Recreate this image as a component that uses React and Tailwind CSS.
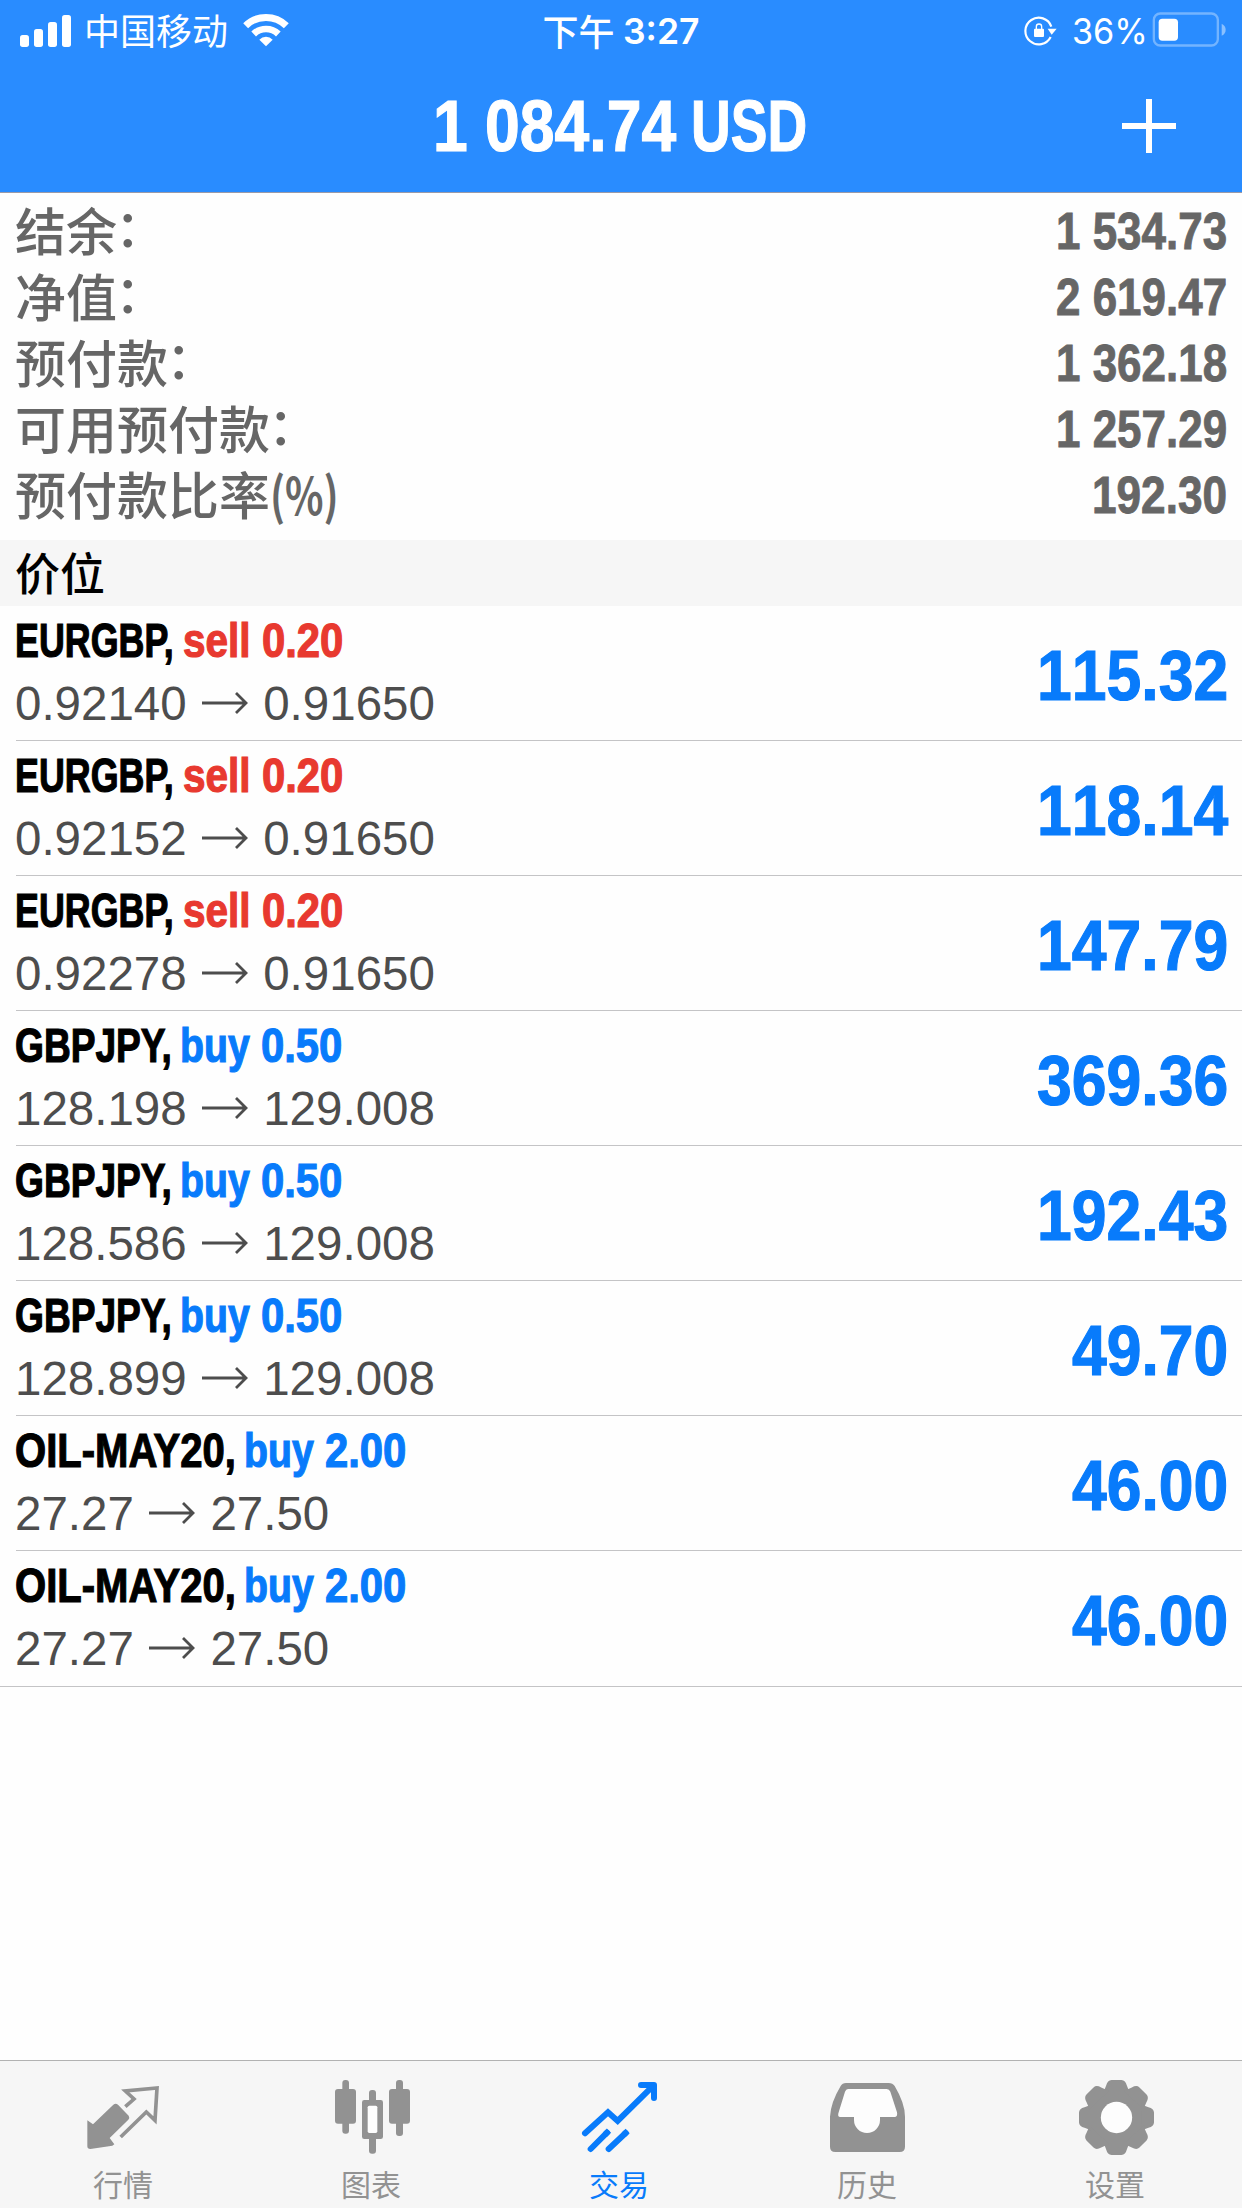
import React, { useLayoutEffect, useRef, useState } from "react";

// Condensed lettering: squeezes the text horizontally to the given width.
function Fit({ width, className = "", children }) {
  const ref = useRef(null);
  const [scale, setScale] = useState(1);
  useLayoutEffect(() => {
    setScale(width / ref.current.offsetWidth);
  }, [width, children]);
  return (
    <span className={"inline-block whitespace-nowrap " + className} style={{ width }}>
      <span ref={ref} className="inline-block origin-left" style={{ transform: `scaleX(${scale})` }}>
        {children}
      </span>
    </span>
  );
}

const balances = [
  ["结余", "：", "1 534.73", 171.5],
  ["净值", "：", "2 619.47", 171.5],
  ["预付款", "：", "1 362.18", 171.5],
  ["可用预付款", "：", "1 257.29", 171.5],
  ["预付款比率", "(%)", "192.30", 135],
];

const positions = [
  { symbol: "EURGBP,", side: "sell", volume: "0.20", from: "0.92140", to: "0.91650", profit: "115.32" },
  { symbol: "EURGBP,", side: "sell", volume: "0.20", from: "0.92152", to: "0.91650", profit: "118.14" },
  { symbol: "EURGBP,", side: "sell", volume: "0.20", from: "0.92278", to: "0.91650", profit: "147.79" },
  { symbol: "GBPJPY,", side: "buy", volume: "0.50", from: "128.198", to: "129.008", profit: "369.36" },
  { symbol: "GBPJPY,", side: "buy", volume: "0.50", from: "128.586", to: "129.008", profit: "192.43" },
  { symbol: "GBPJPY,", side: "buy", volume: "0.50", from: "128.899", to: "129.008", profit: "49.70" },
  { symbol: "OIL-MAY20,", side: "buy", volume: "2.00", from: "27.27", to: "27.50", profit: "46.00" },
  { symbol: "OIL-MAY20,", side: "buy", volume: "2.00", from: "27.27", to: "27.50", profit: "46.00" },
];

const symbolWidth = { "EURGBP,": 159, "GBPJPY,": 157, "OIL-MAY20,": 221 };

function StatusBar() {
  return (
    <div className="grid h-[62px] grid-cols-3 items-center text-white">
      <div className="flex items-center pl-5">
        <svg width="51" height="32" viewBox="60 42 153 96" fill="currentColor">
          <rect x="60" y="102" width="27" height="36" rx="8" />
          <rect x="102" y="84" width="27" height="54" rx="8" />
          <rect x="144" y="63" width="27" height="75" rx="8" />
          <rect x="186" y="42" width="27" height="96" rx="8" />
        </svg>
        <span className="-mt-[4px] ml-[13px] font-['Noto_Sans_CJK_SC',sans-serif] text-[36px] leading-[60px] font-normal">中国移动</span>
        <svg className="-mt-[3px] ml-[15px]" width="46" height="34" viewBox="728 37 138 102" fill="none" stroke="currentColor">
          <path d="M736 75 A87.5 87.5 0 0 1 858 75" strokeWidth="21" />
          <path d="M760 100 A53 53 0 0 1 834 100" strokeWidth="20" />
          <path d="M797 137 L777 117 A28 28 0 0 1 817 117Z" fill="currentColor" stroke="none" />
        </svg>
      </div>
      <div className="-mt-[3px] flex items-center justify-center leading-[60px]">
        <span className="font-['Noto_Sans_CJK_SC',sans-serif] text-[36px] font-medium">下午</span>
        <span className="mt-[2px] ml-2 font-['Inter',sans-serif] text-[36px] font-semibold">
          <Fit width={77}>3:27</Fit>
        </span>
      </div>
      <div className="flex items-center justify-end pr-4 leading-[60px]">
        <svg width="33" height="32" viewBox="130 47 99 96" fill="none" stroke="currentColor">
          <path d="M210 113 A40 40 0 1 1 212 82" strokeWidth="6.5" />
          <path d="M201 88 H228 L213 106Z" fill="currentColor" stroke="none" />
          <rect x="160" y="88" width="30" height="25" rx="3" fill="currentColor" stroke="none" />
          <path d="M167 90 V82 A8 8 0 0 1 183 82 V90" strokeWidth="4" />
        </svg>
        <span className="ml-[15px] font-['Inter',sans-serif] text-[36px]">
          <Fit width={76}>36%</Fit>
        </span>
        <svg className="-mt-[2px] ml-[4px]" width="74" height="36" viewBox="517 37 222 108" fill="none">
          <rect x="522.5" y="41.500" width="192" height="96" rx="19" stroke="#fff" strokeOpacity="0.35" strokeWidth="7" />
          <rect x="537" y="57" width="58" height="66" rx="11" fill="#fff" />
          <path d="M726 72 Q738 78 738 90 Q738 102 726 108Z" fill="#fff" fillOpacity="0.45" />
        </svg>
      </div>
    </div>
  );
}

function Header() {
  return (
    <header className="h-[193px] border-b border-[#9a9aa8] bg-[#298cff]">
      <StatusBar />
      <div className="grid h-[128px] grid-cols-[1fr_auto_1fr] items-center text-white">
        <span />
        <h1 className="flex pr-[2px] font-['Liberation_Sans',sans-serif] text-[73px] leading-[100px] font-bold [-webkit-text-stroke:1.2px]">
          <Fit width={243}>1 084.74</Fit>
          <Fit width={116} className="ml-[15px]">USD</Fit>
        </h1>
        <button className="mr-[65px] justify-self-end">
          <svg width="56" height="56" viewBox="0 0 56 56" stroke="#fff" strokeWidth="6">
            <path d="M28 1V55M1 28H55" />
          </svg>
        </button>
      </div>
    </header>
  );
}

function Balances() {
  return (
    <section className="h-[347px] pt-[5px] text-[#666]">
      {balances.map(([label, suffix, value, width]) => (
        <div key={label} className="flex h-[66px] items-center justify-between pr-[15px] pl-[15px]">
          <span className="-mt-[4px] flex font-['Noto_Sans_CJK_SC',sans-serif] text-[51px] leading-[66px] font-medium">
            {label}
            {suffix === "(%)" ? (
              <Fit width={69} className="font-bold">{suffix}</Fit>
            ) : (
              <span className="-translate-x-[2px] -translate-y-[4px]">{suffix}</span>
            )}
          </span>
          <span className="mt-[2px] font-['Liberation_Sans',sans-serif] text-[51px] leading-[66px] font-bold [-webkit-text-stroke:0.9px]">
            <Fit width={width}>{value}</Fit>
          </span>
        </div>
      ))}
    </section>
  );
}

function Position({ p, last }) {
  const sell = p.side === "sell";
  return (
    <li className={last ? "h-[136px] border-b border-[#c4c4c6] pl-[15px]" : "h-[135px] pl-[15px]"}>
      <div className={last ? "flex h-full justify-between pr-[14px]" : "ml-px flex h-full justify-between border-b border-[#c4c4c6] pr-[14px]"}>
        <div className={last ? "pt-[5px]" : "-ml-px pt-[5px]"}>
          <div className="flex h-[60px] font-['Liberation_Sans',sans-serif] text-[48px] leading-[60px] font-bold [-webkit-text-stroke:1.2px]">
            <Fit width={symbolWidth[p.symbol]} className="text-black">{p.symbol}</Fit>
            <span className={sell ? "ml-[9px] flex text-[#e8392f]" : "ml-[8px] flex text-[#087bfb]"}>
              <Fit width={sell ? 67.5 : 69.5}>{p.side}</Fit>
              <Fit width={81} className="ml-[11px]">{p.volume}</Fit>
            </span>
          </div>
          <div className="mt-[3px] flex h-[60px] items-center font-['Liberation_Sans',sans-serif] text-[47.500px] leading-[60px] text-[#4d4d4d]">
            <span>{p.from}</span>
            <svg className="-mt-[3px] mr-[15px] ml-[15.500px]" width="46" height="22" viewBox="0 0 46 22" fill="none" stroke="currentColor" strokeWidth="2.800">
              <path d="M0 11H44M34 1L44 11L34 21" />
            </svg>
            <span>{p.to}</span>
          </div>
        </div>
        <div className="flex items-center pt-[4px] font-['Liberation_Sans',sans-serif] text-[71px] leading-none font-bold text-[#087bfb] [font-kerning:none] [-webkit-text-stroke:1.2px]">
          <Fit width={p.profit.length === 6 ? 191 : 156.5}>{p.profit}</Fit>
        </div>
      </div>
    </li>
  );
}

function QuotesIcon() {
  return (
    <svg width="80" height="80" viewBox="252 81 240 240" fill="none">
      <path d="M262 211 L279 223 L340 164 Q347 158 354 164 L386 197 Q390 203 385 209 L329 264 L343 283 L337 287 L271 297 Q262 297 262 289Z" fill="#929292" />
      <path d="M376 170 L402 147 L376 123 L471 114 L465 211 L439 186 L362 261" stroke="#929292" strokeWidth="11" />
    </svg>
  );
}

function ChartIcon() {
  return (
    <svg width="80" height="80" viewBox="996 81 240 240" fill="#929292">
      <rect x="1027" y="90" width="20" height="161" rx="9" />
      <rect x="1005" y="117" width="63" height="104" rx="9" />
      <rect x="1107" y="120" width="21" height="191" rx="9" />
      <rect x="1086" y="150" width="63" height="117" rx="7" />
      <rect x="1103" y="167" width="29" height="82" rx="5" fill="#fdfdfd" />
      <rect x="1188" y="90" width="21" height="168" rx="9" />
      <rect x="1167" y="117" width="63" height="104" rx="9" />
    </svg>
  );
}

function TradeIcon() {
  return (
    <svg width="80" height="80" viewBox="420 81 240 240" fill="none" stroke="#087bfb" strokeWidth="18" strokeLinecap="round">
      <path d="M435 250 L504 187 L533 213 L640 107" strokeLinejoin="miter" />
      <path d="M603 105 H642 V144" strokeLinejoin="round" />
      <path d="M618 105 L642 128 V105Z" fill="#087bfb" strokeWidth="4" />
      <path d="M452 297 L501 248 M506 297 L557 249" />
      <path d="M495 254 L507 242 M551 254 L563 243" strokeLinecap="butt" />
    </svg>
  );
}

function HistoryIcon() {
  return (
    <svg width="80" height="80" viewBox="84 81 240 240">
      <path d="M138 99 H266 Q278 99 284 108 Q315 160 315 200 V290 Q315 306 299 306 H106 Q90 306 90 290 V200 Q92 158 122 108 Q127 99 138 99Z" fill="#929292" />
      <path d="M144 117 H260 Q268 117 271 125 L291 187 Q294 201 283 201 H240 V210 A39 39 0 0 1 162 210 V201 H121 Q111 201 116 187 L135 125 Q138 117 144 117Z" fill="#fdfdfd" />
    </svg>
  );
}

function SettingsIcon() {
  return (
    <svg width="80" height="80" viewBox="828 81 240 240" fill="#929292">
      <g transform="translate(949.5 202.500)">
        <circle r="85" />
        {[0, 45, 90, 135, 180, 225, 270, 315].map((a) => (
          <path key={a} transform={`rotate(${a})`} d="M-42 -74 Q-35 -83 -31 -96 Q-27 -112 -15 -112.500 H15 Q27 -112 31 -96 Q35 -83 42 -74Z" />
        ))}
        <circle r="47" fill="#fdfdfd" />
      </g>
    </svg>
  );
}

const tabs = [
  ["行情", QuotesIcon],
  ["图表", ChartIcon],
  ["交易", TradeIcon],
  ["历史", HistoryIcon],
  ["设置", SettingsIcon],
];

export default function App() {
  return (
    <div className="flex h-[2208px] w-[1242px] flex-col overflow-hidden bg-[#fefefe]">
      <Header />
      <Balances />
      <h2 className="h-[66px] bg-[#f6f6f6] pl-[15px] font-['Noto_Sans_CJK_SC',sans-serif] text-[45px] leading-[64px] font-medium text-black">价位</h2>
      <ul className="grow">
        {positions.map((p, i) => (
          <Position key={i} p={p} last={i === positions.length - 1} />
        ))}
      </ul>
      <nav className="flex h-[148px] border-t border-[#b2b2b2] bg-[#f6f6f6] pt-4">
        {tabs.map(([label, Icon]) => (
          <a
            key={label}
            className={
              label === "交易"
                ? "flex w-[248px] flex-col items-center text-[#087bfb]"
                : "flex w-[248px] flex-col items-center text-[#929292]"
            }
          >
            <Icon />
            <span className="mt-[6px] -ml-[2px] font-['Noto_Sans_CJK_SC',sans-serif] text-[30px] leading-[40px]">{label}</span>
          </a>
        ))}
      </nav>
    </div>
  );
}
